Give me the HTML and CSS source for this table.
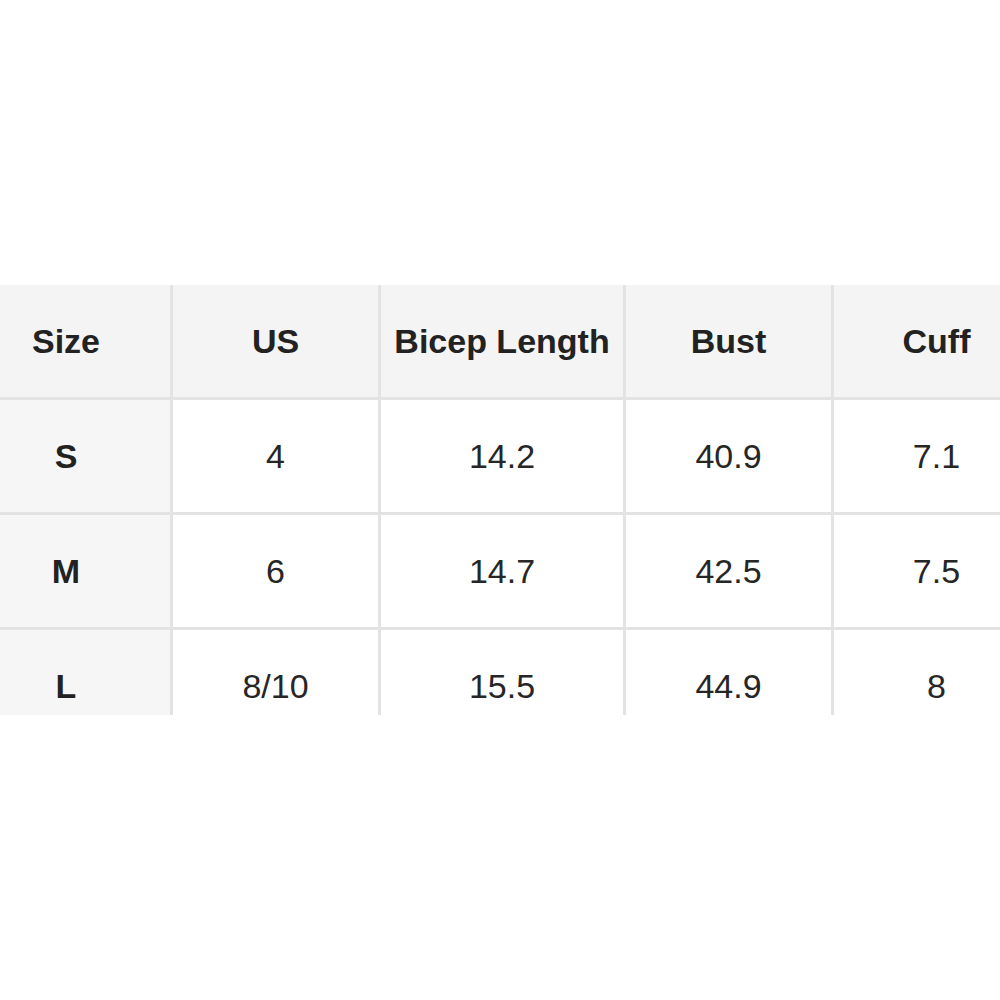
FILE: index.html
```html
<!DOCTYPE html>
<html lang="en">
<head>
<meta charset="utf-8">
<title>Size Chart</title>
<link rel="stylesheet" href="styles.css">
</head>
<body>
<div class="page">
  <div class="clip">
    <div class="chart">
      <div class="cell head">Size</div>
      <div class="cell head">US</div>
      <div class="cell head">Bicep Length</div>
      <div class="cell head">Bust</div>
      <div class="cell head">Cuff</div>

      <div class="cell label">S</div>
      <div class="cell">4</div>
      <div class="cell">14.2</div>
      <div class="cell">40.9</div>
      <div class="cell">7.1</div>

      <div class="cell label">M</div>
      <div class="cell">6</div>
      <div class="cell">14.7</div>
      <div class="cell">42.5</div>
      <div class="cell">7.5</div>

      <div class="cell label">L</div>
      <div class="cell">8/10</div>
      <div class="cell">15.5</div>
      <div class="cell">44.9</div>
      <div class="cell">8</div>
    </div>
  </div>
</div>
</body>
</html>
```
FILE: styles.css
```css
html, body {
  margin: 0;
  padding: 0;
  background: #ffffff;
}

.page {
  width: 1000px;
  height: 1000px;
  padding-top: 285px;
  box-sizing: border-box;
  overflow: hidden;
}

.clip {
  height: 430px;
  overflow: hidden;
}

.chart {
  display: grid;
  grid-template-columns: 208px 205px 242px 205px 205px;
  grid-template-rows: 112px 112px 112px 112px;
  gap: 3px;
  background: #e3e3e3;
  margin-left: -38px;
  width: max-content;
  font-family: "Liberation Sans", Arial, sans-serif;
  font-size: 34px;
  color: #262626;
}

.cell {
  background: #ffffff;
  display: flex;
  align-items: center;
  justify-content: center;
}

.head {
  background: #f4f4f4;
  font-weight: bold;
  color: #222222;
}

.label {
  background: #f6f6f6;
  font-weight: bold;
  color: #222222;
}
```
